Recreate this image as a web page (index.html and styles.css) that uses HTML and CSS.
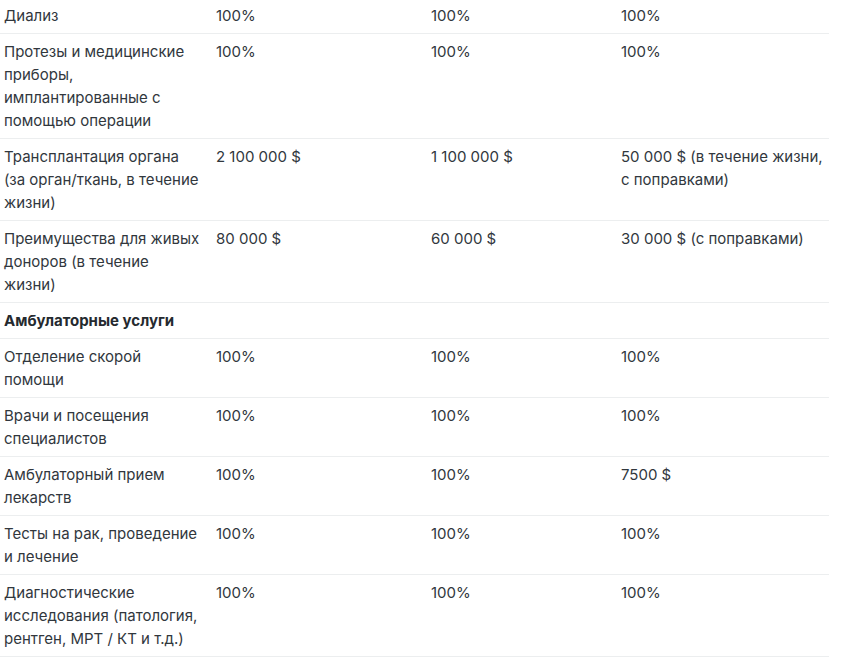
FILE: index.html
```html
<!DOCTYPE html>
<html lang="ru">
<head>
<meta charset="utf-8">
<link rel="stylesheet" href="styles.css">
</head>
<body>
<table class="benefits">
  <colgroup>
    <col class="c1"><col class="c2"><col class="c3"><col class="c4">
  </colgroup>
  <tbody>
    <tr><td>Диализ</td><td>100%</td><td>100%</td><td>100%</td></tr>
    <tr><td>Протезы и медицинские приборы, имплантированные с помощью операции</td><td>100%</td><td>100%</td><td>100%</td></tr>
    <tr><td>Трансплантация органа (за орган/ткань, в течение жизни)</td><td>2&nbsp;100&nbsp;000&nbsp;$</td><td>1&nbsp;100&nbsp;000&nbsp;$</td><td>50&nbsp;000&nbsp;$ (в течение жизни, с поправками)</td></tr>
    <tr><td>Преимущества для живых доноров (в течение жизни)</td><td>80&nbsp;000&nbsp;$</td><td>60&nbsp;000&nbsp;$</td><td>30&nbsp;000&nbsp;$ (с поправками)</td></tr>
    <tr class="section"><td colspan="4">Амбулаторные услуги</td></tr>
    <tr><td>Отделение скорой помощи</td><td>100%</td><td>100%</td><td>100%</td></tr>
    <tr><td>Врачи и посещения специалистов</td><td>100%</td><td>100%</td><td>100%</td></tr>
    <tr><td>Амбулаторный прием лекарств</td><td>100%</td><td>100%</td><td>7500&nbsp;$</td></tr>
    <tr><td>Тесты на рак, проведение и лечение</td><td>100%</td><td>100%</td><td>100%</td></tr>
    <tr><td>Диагностические исследования (патология, рентген, МРТ / КТ и т.д.)</td><td>100%</td><td>100%</td><td>100%</td></tr>
  </tbody>
</table>
</body>
</html>
```
FILE: styles.css
```css
html, body {
  margin: 0;
  padding: 0;
  background: #ffffff;
}
body {
  font-family: Inter, "Noto Sans", sans-serif;
  font-size: 15px;
  line-height: 23px;
  color: #31373d;
}
.benefits {
  border-collapse: collapse;
  table-layout: fixed;
  width: 829px;
  margin-top: -2px;
}
.c1 { width: 212px; }
.c2 { width: 215px; }
.c3 { width: 190px; }
.c4 { width: 212px; }
.benefits td {
  padding: 6px 8px 6px 4px;
  vertical-align: top;
  border-bottom: 1px solid #eceeef;
}
.benefits td:last-child {
  padding-right: 2px;
}
.section td {
  font-weight: 700;
  color: #252a2f;
}
```
